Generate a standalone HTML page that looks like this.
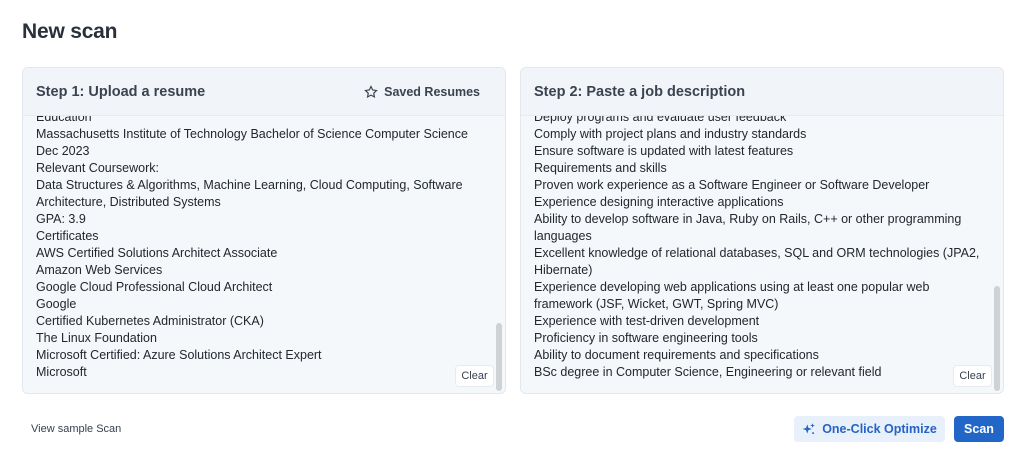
<!DOCTYPE html>
<html><head><style>
*{box-sizing:border-box;margin:0;padding:0}
body{width:1024px;height:455px;background:#fff;font-family:"Liberation Sans",sans-serif;color:#1f2937;position:relative;overflow:hidden}
h1{position:absolute;left:22px;top:20px;font-size:21px;font-weight:bold;color:#2a313b;letter-spacing:-0.2px}
.panel{position:absolute;top:67px;width:484px;height:327px;border:1px solid #e3e8ee;border-radius:6px;background:#f5f8fb;overflow:hidden}
.hd{position:relative;z-index:2;height:48px;background:#f1f4f8;border-bottom:1px solid #e6ebf0;padding:0 13px;display:flex;align-items:center;justify-content:space-between;font-size:14.5px;font-weight:bold;color:#3b4350}
.hd .sv{font-size:12.5px;color:#3b4350;display:flex;align-items:center;gap:6px;padding-right:12px}
.body{position:absolute;z-index:1;top:41px;left:13px;right:22px;font-size:12.5px;line-height:17px;color:#22272e}
.sb{position:absolute;right:3px;width:6px;border-radius:3px;background:#cfd2d5}
.clr{position:absolute;z-index:3;bottom:6px;width:39px;height:22px;background:#fff;border:1px solid #e7eaee;border-radius:4px;font-size:11px;display:flex;align-items:center;justify-content:center;color:#374151}
.btn{position:absolute;top:416px;height:26px;border-radius:4px;font-size:12.5px;font-weight:bold;display:flex;align-items:center;justify-content:center}
</style></head><body>
<h1>New scan</h1>
<div class="panel" style="left:22px">
<div class="hd"><span>Step 1: Upload a resume</span><span class="sv"><svg width="14" height="14" viewBox="0 0 24 24" fill="none" stroke="#3b4350" stroke-width="2"><path d="M12 2.5l2.9 6 6.6.9-4.8 4.6 1.2 6.5L12 17.4 6.1 20.5l1.2-6.5L2.5 9.4l6.6-.9z"/></svg>Saved Resumes</span></div>
<div class="body">
Education<br>Massachusetts Institute of Technology Bachelor of Science Computer Science<br>Dec 2023<br>Relevant Coursework:<br>Data Structures &amp; Algorithms, Machine Learning, Cloud Computing, Software<br>Architecture, Distributed Systems<br>GPA: 3.9<br>Certificates<br>AWS Certified Solutions Architect Associate<br>Amazon Web Services<br>Google Cloud Professional Cloud Architect<br>Google<br>Certified Kubernetes Administrator (CKA)<br>The Linux Foundation<br>Microsoft Certified: Azure Solutions Architect Expert<br>Microsoft
</div>
<div class="sb" style="top:255px;height:68px"></div>
<div class="clr" style="right:11px">Clear</div>
</div>
<div class="panel" style="left:520px">
<div class="hd"><span>Step 2: Paste a job description</span></div>
<div class="body">
Deploy programs and evaluate user feedback<br>Comply with project plans and industry standards<br>Ensure software is updated with latest features<br>Requirements and skills<br>Proven work experience as a Software Engineer or Software Developer<br>Experience designing interactive applications<br>Ability to develop software in Java, Ruby on Rails, C++ or other programming<br>languages<br>Excellent knowledge of relational databases, SQL and ORM technologies (JPA2,<br>Hibernate)<br>Experience developing web applications using at least one popular web<br>framework (JSF, Wicket, GWT, Spring MVC)<br>Experience with test-driven development<br>Proficiency in software engineering tools<br>Ability to document requirements and specifications<br>BSc degree in Computer Science, Engineering or relevant field
</div>
<div class="sb" style="top:218px;height:105px"></div>
<div class="clr" style="right:11px">Clear</div>
</div>
<div style="position:absolute;left:31px;top:423px;font-size:11px;color:#374151">View sample Scan</div>
<div class="btn" style="left:794px;width:151px;background:#e8f0fb;color:#2563c4;gap:6px"><svg width="14" height="14" viewBox="0 0 24 24" fill="#2563c4"><path d="M9 4l2 6 6 2-6 2-2 6-2-6-6-2 6-2z"/><path d="M18 2l1 3 3 1-3 1-1 3-1-3-3-1 3-1z"/><circle cx="19" cy="19" r="1.6"/></svg>One-Click Optimize</div>
<div class="btn" style="left:954px;width:50px;background:#2266c8;color:#fff">Scan</div>
</body></html>
